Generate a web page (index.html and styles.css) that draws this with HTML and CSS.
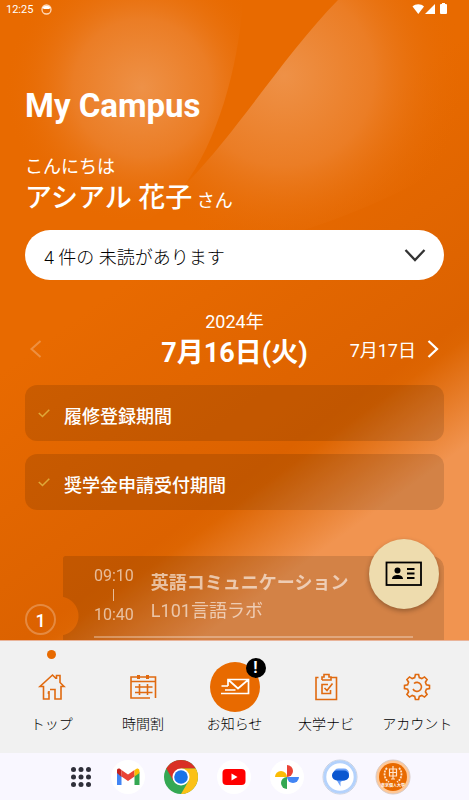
FILE: index.html
```html
<!DOCTYPE html>
<html lang="ja">
<head>
    <meta charset="UTF-8">
    <meta name="viewport" content="width=device-width, initial-scale=1.0">
    <title>My Campus</title>
    <link rel="stylesheet" href="styles.css">
</head>
<body>
    <main class="screen">
        <svg class="backdrop" viewBox="0 0 469 640" preserveAspectRatio="none" aria-hidden="true">
            <defs>
                <radialGradient id="glowLeft" gradientUnits="userSpaceOnUse" cx="142" cy="88" r="138">
                    <stop offset="0" stop-color="#ee9147"/>
                    <stop offset="0.5" stop-color="#eb7d25"/>
                    <stop offset="1" stop-color="#e86a00" stop-opacity="0"/>
                </radialGradient>
                <radialGradient id="glowRight" gradientUnits="userSpaceOnUse" cx="284" cy="76" r="180">
                    <stop offset="0" stop-color="#ee9147"/>
                    <stop offset="0.5" stop-color="#eb7d25"/>
                    <stop offset="1" stop-color="#e66900" stop-opacity="0"/>
                </radialGradient>
            </defs>
            <path fill="url(#glowLeft)" d="M0 0H243C238 70 217 142 183 187C170 204 150 222 120 240H0Z"/>
            <path fill="url(#glowRight)" d="M338 0C285 54 240 128 187 183C173 198 160 214 137 228L170 262C250 252 390 210 469 150V0Z"/>
        </svg>

        <div class="status-bar">
            <span>12:25</span>
            <svg width="11" height="11" viewBox="0 0 11 11">
                <circle cx="5.500" cy="5.500" r="4.500" fill="none" stroke="#ffd9b8" stroke-width="1.300"/>
                <path d="M1.500 4C2 1 9 1 9.500 4L8 5H3Z" fill="#fff"/>
            </svg>
            <svg class="signals" width="36" height="12" viewBox="0 0 36 12" fill="#fff">
                <path d="M0.500 3.500C3.500 0.500 9 0.500 12 3.500L6.300 11Z"/>
                <path d="M13 11L23 1V11Z"/>
                <path d="M30 0H33V1H34Q35 1 35 2V10Q35 11 34 11H29Q28 11 28 10V2Q28 1 29 1H30Z"/>
            </svg>
        </div>

        <h1 class="title">My Campus</h1>

        <p class="hello">こんにちは</p>
        <p class="user-name"><strong>アシアル 花子</strong> さん</p>

        <button class="unread" type="button">
            <span>4 件の 未読があります</span>
            <svg width="22" height="14" viewBox="0 0 22 14">
                <path d="M1.500 1L11 11L20.500 1" fill="none" stroke="#333" stroke-width="2.300"/>
            </svg>
        </button>

        <div class="date-nav">
            <button class="day-button prev" type="button" aria-label="前の日">
                <svg width="12" height="18" viewBox="0 0 12 18">
                    <path d="M10.500 1L1.500 9L10.500 17" fill="none" stroke="currentColor" stroke-width="2"/>
                </svg>
            </button>
            <div class="current-day">
                <p class="year">2024年</p>
                <h2 class="day">7月16日(火)</h2>
            </div>
            <button class="day-button next" type="button">
                7月17日
                <svg width="12" height="18" viewBox="0 0 12 18">
                    <path d="M1.500 1L10 9L1.500 17" fill="none" stroke="currentColor" stroke-width="2.300"/>
                </svg>
            </button>
        </div>

        <ul class="events">
            <li class="event">
                <svg width="12" height="14" viewBox="0 0 12 14"><path d="M0.800 5L4.500 8.500L11.300 1.800" fill="none" stroke="#dfa838" stroke-width="1.600"/></svg>
                履修登録期間
            </li>
            <li class="event">
                <svg width="12" height="14" viewBox="0 0 12 14"><path d="M0.800 5L4.500 8.500L11.300 1.800" fill="none" stroke="#dfa838" stroke-width="1.600"/></svg>
                奨学金申請受付期間
            </li>
        </ul>

        <section class="lesson">
            <span class="period">1</span>
            <div class="lesson-card">
                <div class="lesson-row">
                    <div class="lesson-time">
                        <span>09:10</span>
                        <i class="time-line"></i>
                        <span>10:40</span>
                    </div>
                    <div class="lesson-info">
                        <h3>英語コミュニケーション</h3>
                        <p>L101言語ラボ</p>
                    </div>
                </div>
            </div>
        </section>

        <button class="id-card" type="button" aria-label="学生証">
            <svg width="38" height="26" viewBox="0 0 38 26">
                <rect x="1.500" y="1.500" width="34.500" height="22.500" fill="none" stroke="#000" stroke-width="1.800"/>
                <circle cx="12.500" cy="9.500" r="3"/>
                <path d="M7 18C7 12.700 18 12.700 18 18Z"/>
                <path d="M22 8H29.500M22 12.500H29.500M22 17H29.500" stroke="#000" stroke-width="1.800"/>
            </svg>
        </button>
    </main>

    <nav class="tab-bar">
        <a class="tab active" href="#">
            <svg class="tab-icon" width="30" height="30" viewBox="0 0 30 30">
                <path d="M11.500 22V19.500M13 17.500H18V27H24V14.500H27L23 10.500V3.500H19.500V7M19 6.500L15.500 3L3 14.500H6.500V27H12V19"/>
            </svg>
            <span>トップ</span>
        </a>
        <a class="tab" href="#">
            <svg class="tab-icon" width="30" height="30" viewBox="0 0 30 30">
                <path d="M22 26H3V5H27.500V26M3 9.500H27.500M7 15H24.500M7 20.500H24.500M11.500 12V23M19.500 12V23"/>
                <path d="M10.500 3V7M19.500 3V7" stroke-width="3"/>
            </svg>
            <span>時間割</span>
        </a>
        <a class="tab" href="#">
            <span class="news-icon">
                <svg width="30" height="18" viewBox="0 0 30 18" fill="none" stroke="#fff" stroke-width="1.700">
                    <path d="M8 8V1.500H28.500V15.500H1M8 1.500L18 10.500L28.500 1.500M1.500 8H8M5 12H15.500"/>
                </svg>
                <b class="badge">!</b>
            </span>
            <span>お知らせ</span>
        </a>
        <a class="tab" href="#">
            <svg class="tab-icon" width="30" height="30" viewBox="0 0 30 30">
                <path d="M7.500 5.500H5V27.500H25.500V5.500H20M11 8V5H13V2.500H18V5H20V8H11"/>
                <path d="M17 12.500H11V21.500H19.500V18M13.500 16L16 18.500L21.500 11.500"/>
            </svg>
            <span>大学ナビ</span>
        </a>
        <a class="tab" href="#">
            <svg class="tab-icon" width="30" height="30" viewBox="0 0 30 30">
                <path d="M13.400 2.500H16.600L17.300 5.600L19.800 6.600L22.500 4.900L25.100 7.500L23.400 10.200L24.400 12.700L27.500 13.400V16.600L24.400 17.300L23.400 19.800L25.100 22.500L22.500 25.100L19.800 23.400L17.300 24.400L16.600 27.500H13.400L12.700 24.400L10.200 23.400L7.500 25.100L4.900 22.500L6.600 19.800L5.600 17.300L2.500 16.600V13.400L5.600 12.700L6.600 10.200L4.900 7.500L7.500 4.900L10.200 6.600L12.700 5.600Z"/>
                <path d="M12 11.500A4.500 4.500 0 1 1 11 17"/>
            </svg>
            <span>アカウント</span>
        </a>
    </nav>

    <footer class="dock">
        <svg class="apps" width="20" height="20" viewBox="0 0 20 20" fill="#2f2f3a">
            <circle cx="2.500" cy="2.500" r="2.500"/><circle cx="10" cy="2.500" r="2.500"/><circle cx="17.500" cy="2.500" r="2.500"/>
            <circle cx="2.500" cy="10" r="2.500"/><circle cx="10" cy="10" r="2.500"/><circle cx="17.500" cy="10" r="2.500"/>
            <circle cx="2.500" cy="17.500" r="2.500"/><circle cx="10" cy="17.500" r="2.500"/><circle cx="17.500" cy="17.500" r="2.500"/>
        </svg>
        <!-- Gmail -->
        <svg width="36" height="36" viewBox="0 0 36 36">
            <circle cx="18" cy="18" r="17" fill="#fff"/>
            <path d="M7 13V26H11.500V16Z" fill="#4285f4"/>
            <path d="M24.500 16V26H29.500V13Z" fill="#34a853"/>
            <path d="M7 14V11Q7 9 9.500 9.500L11.500 11V18Z" fill="#c5221f"/>
            <path d="M11.500 11L18 15.500L24.500 11V17.500L18 22L11.500 17.500Z" fill="#ea4335"/>
            <path d="M24.500 11L27 9.500Q29.500 9 29.500 12V14L24.500 17.500Z" fill="#fbbc04"/>
        </svg>
        <!-- Chrome -->
        <svg width="36" height="36" viewBox="0 0 36 36">
            <circle cx="18" cy="18" r="17" fill="#34a853"/>
            <path d="M3.300 9.500A17 17 0 0 1 32.700 9.500H18L10.600 22.200Z" fill="#d93025"/>
            <path d="M32.700 9.500A17 17 0 0 1 18 35L25.400 22.200L18 9.500Z" fill="#fbc117"/>
            <circle cx="18" cy="18" r="8.500" fill="#fff"/>
            <circle cx="18" cy="18" r="6.800" fill="#1a73e8"/>
        </svg>
        <!-- YouTube -->
        <svg width="36" height="36" viewBox="0 0 36 36">
            <circle cx="18" cy="18" r="17" fill="#fff"/>
            <rect x="6.500" y="10" width="23" height="16" rx="4" fill="#f00"/>
            <path d="M15.500 14.500V21.500L21.500 18Z" fill="#fff"/>
        </svg>
        <!-- Photos -->
        <svg width="36" height="36" viewBox="0 0 36 36">
            <circle cx="18" cy="18" r="17" fill="#fff"/>
            <path d="M18 6A6 6 0 0 1 18 18Z" fill="#ea4335"/>
            <path d="M30 18A6 6 0 0 1 18 18Z" fill="#4285f4"/>
            <path d="M18 30A6 6 0 0 1 18 18Z" fill="#34a853"/>
            <path d="M6 18A6 6 0 0 1 18 18Z" fill="#fbbc04"/>
        </svg>
        <!-- Messages -->
        <svg width="36" height="36" viewBox="0 0 36 36">
            <circle cx="18" cy="18" r="17" fill="#fff" stroke="#ccd0dc"/>
            <circle cx="18" cy="18" r="15.200" fill="none" stroke="#b4d2fc" stroke-width="3"/>
            <rect x="11.500" y="9.500" width="15.500" height="12" rx="5" fill="#6ba0f8"/>
            <path d="M14 20H23L18.500 23V27.500Z" fill="#6ba0f8"/>
            <rect x="10" y="11.500" width="17" height="10" rx="5" fill="#0b57d0"/>
        </svg>
        <!-- University app -->
        <svg width="36" height="36" viewBox="0 0 36 36">
            <circle cx="18" cy="18" r="17" fill="#ffc897" stroke="#d8cbc8"/>
            <circle cx="18" cy="18" r="14" fill="#e86a00"/>
            <g fill="none" stroke="#ffe4cc">
                <path d="M12 9C8 13 9 20 14 23M24 9C28 13 27 20 22 23" stroke-width="1.800" stroke-dasharray="2 1"/>
                <path d="M18 7V20M14.500 10H21.500V17H14.500ZM14.500 13.500H21.500M16 20H20" stroke-width="1.200"/>
            </g>
            <text x="18" y="28" class="emblem-text">東京個人大学</text>
        </svg>
    </footer>
</body>
</html>
```

FILE: styles.css
```css
* {
    box-sizing: border-box;
}

body {
    display: flex;
    flex-direction: column;
    height: 100vh;
    margin: 0;
    font-family: Roboto, "Noto Sans CJK JP", sans-serif;
    font-size: 18px;
    color: #fff;
}

h1, h2, h3, p, ul {
    margin: 0;
    padding: 0;
}

button {
    border: none;
    background: none;
    padding: 0;
    font: inherit;
    color: inherit;
    cursor: pointer;
}

.screen {
    position: relative;
    flex: 1;
    min-height: 0;
    overflow: hidden;
    padding: 0 25px;
    background: linear-gradient(144deg, #e86a00 38%, #dc6200 67%, #dd6502 69%, #f19450 80%);
}

.screen > * {
    position: relative;
}

.screen > .backdrop {
    position: absolute;
    top: 0;
    left: 0;
    width: 100%;
    height: 100%;
}

/* status bar */
.status-bar {
    display: flex;
    align-items: center;
    gap: 8px;
    height: 18px;
    margin: 0 -4px 0 -19px;
    font-size: 11px;
}

.signals {
    margin-left: auto;
}

/* greeting */
.title {
    margin-top: 68px;
    font-size: 33px;
    line-height: 40px;
}

.hello {
    margin-top: 27px;
    line-height: 28px;
}

.user-name {
    line-height: 34px;
}

.user-name strong {
    font-size: 27px;
    font-weight: 500;
}

.unread {
    display: flex;
    justify-content: space-between;
    align-items: center;
    width: 100%;
    height: 50px;
    margin-top: 12px;
    padding: 2px 18px 0 19px;
    border-radius: 25px;
    background: #fff;
    color: #000;
    font-weight: 300;
}

/* date switcher */
.date-nav {
    display: grid;
    grid-template-columns: 1fr auto 1fr;
    align-items: end;
    margin-top: 28px;
    padding: 0 5px;
}

.current-day {
    text-align: center;
}

.year {
    line-height: 28px;
}

.day {
    font-size: 27px;
    line-height: 34px;
}

.day-button {
    display: flex;
    align-items: center;
    gap: 11px;
    height: 42px;
}

.prev {
    opacity: 0.25;
}

.next {
    justify-self: end;
}

/* all day events */
.events {
    display: flex;
    flex-direction: column;
    gap: 13px;
    margin-top: 15px;
    list-style: none;
}

.event {
    display: flex;
    align-items: center;
    gap: 14px;
    height: 56px;
    padding: 4px 13px 0;
    border-radius: 12px;
    background: rgba(0, 0, 0, 0.12);
    font-weight: 500;
}

/* timetable */
.lesson {
    display: flex;
    gap: 7px;
    margin-top: 46px;
}

.period {
    width: 31px;
    height: 31px;
    margin-top: 48px;
    border: 2px solid rgba(255, 255, 255, 0.25);
    border-radius: 50%;
    font-weight: 500;
    line-height: 29px;
    text-align: center;
}

.lesson-card {
    flex: 1;
    height: 120px;
    padding: 7px 31px;
    border-radius: 2px 12px 12px 2px;
    background: rgba(0, 0, 0, 0.12);
    color: rgba(255, 255, 255, 0.6);
    -webkit-mask: radial-gradient(circle at -4px 60px, transparent 19px, #000 20px);
    mask: radial-gradient(circle at -4px 60px, transparent 19px, #000 20px);
}

.lesson-row {
    display: flex;
    gap: 17px;
    padding-bottom: 9px;
    border-bottom: 2px solid rgba(255, 255, 255, 0.3);
}

.lesson-time {
    display: flex;
    flex-direction: column;
    align-items: center;
    gap: 1px;
    font-size: 16px;
    line-height: 24px;
}

.lesson-time span {
    padding-top: 1px;
}

.time-line {
    width: 1px;
    height: 12px;
    background: rgba(255, 255, 255, 0.6);
}

.lesson-info {
    padding-top: 6px;
    line-height: 28px;
}

.lesson-info h3 {
    font-size: 18px;
    font-weight: 700;
}

.screen > .id-card {
    position: absolute;
    right: 30px;
    bottom: 31px;
    display: flex;
    justify-content: center;
    align-items: center;
    width: 70px;
    height: 70px;
    border-radius: 50%;
    background: #eedcae;
    box-shadow: 0 2px 5px rgba(0, 0, 0, 0.3);
}

/* bottom tabs */
.tab-bar {
    display: flex;
    height: 113px;
    padding: 0 6px;
    border-top: 1px solid #e9b49a;
    background: #f1f1f1;
}

.tab {
    position: relative;
    flex: 1;
    display: flex;
    flex-direction: column;
    align-items: center;
    justify-content: flex-end;
    padding-bottom: 18px;
    color: #000;
    font-size: 14px;
    font-weight: 300;
    line-height: 22px;
    text-decoration: none;
    white-space: nowrap;
}

.tab.active::before {
    content: "";
    position: absolute;
    top: 9px;
    width: 9px;
    height: 9px;
    border-radius: 50%;
    background: #e86a00;
}

.tab-icon {
    margin-bottom: 11px;
    fill: none;
    stroke: #e06a10;
    stroke-width: 1.6px;
}

.news-icon {
    position: relative;
    display: flex;
    justify-content: center;
    align-items: center;
    width: 50px;
    height: 50px;
    margin-bottom: 1px;
    border-radius: 50%;
    background: #e86a00;
}

.badge {
    position: absolute;
    top: -4px;
    right: -6px;
    width: 20px;
    height: 20px;
    border-radius: 50%;
    background: #000;
    color: #fff;
    font-size: 16px;
    font-weight: 700;
    line-height: 20px;
    text-align: center;
}

/* system dock */
.dock {
    display: flex;
    justify-content: center;
    align-items: center;
    gap: 17px;
    height: 47px;
    padding-left: 12px;
    background: #f9f7ff;
}

.apps {
    margin-right: 2px;
}

.emblem-text {
    fill: #fff;
    font-size: 4px;
    font-weight: 700;
    text-anchor: middle;
}
```
